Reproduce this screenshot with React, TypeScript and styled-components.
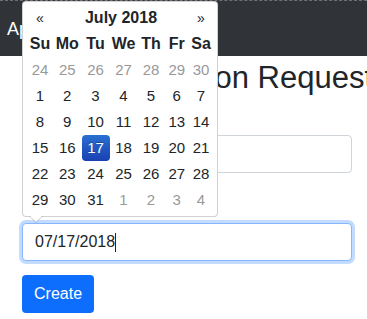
import React from 'react';
import styled, { createGlobalStyle, css } from 'styled-components';

const GlobalStyle = createGlobalStyle`
  html, body {
    margin: 0;
    padding: 0;
    background: #fff;
    font-family: "Liberation Sans", Arial, sans-serif;
    color: #212529;
  }
  * { box-sizing: border-box; }
`;

const weeks = [
  [24, 25, 26, 27, 28, 29, 30],
  [1, 2, 3, 4, 5, 6, 7],
  [8, 9, 10, 11, 12, 13, 14],
  [15, 16, 17, 18, 19, 20, 21],
  [22, 23, 24, 25, 26, 27, 28],
  [29, 30, 31, 1, 2, 3, 4],
];
const dayNames = ['Su', 'Mo', 'Tu', 'We', 'Th', 'Fr', 'Sa'];

const App = () => {
  return (
    <>
      <GlobalStyle />
      <Page>
        <Navbar>
          <Brand>Application</Brand>
        </Navbar>
        <Main>
          <Title>Create Vacation Request</Title>
          <TextInput type="text" aria-label="Employee" defaultValue="" />
          <FocusedField aria-label="Start date">
            07/17/2018<Caret />
          </FocusedField>
          <Button>Create</Button>

          <Picker>
            <Grid>
              <NavCell>«</NavCell>
              <MonthCell>July 2018</MonthCell>
              <NavCell>»</NavCell>
              {dayNames.map((d) => (
                <DowCell key={d}>{d}</DowCell>
              ))}
              {weeks.map((week, wi) =>
                week.map((day, di) => {
                  const outside = wi === 0 || (wi === 5 && di > 2);
                  return (
                    <DayCell
                      key={`${wi}-${di}`}
                      $muted={outside}
                      $active={wi === 3 && day === 17}
                    >
                      {day}
                    </DayCell>
                  );
                })
              )}
            </Grid>
          </Picker>
        </Main>
      </Page>
    </>
  );
};

export default App;

const Page = styled.div`
  width: 100%;
  min-height: 319px;
`;

const Navbar = styled.nav`
  height: 56px;
  background-color: #303438;
  border-top: 1px dashed #6d7074;
  display: flex;
  align-items: center;
  padding-left: 7px;
`;

const Brand = styled.span`
  color: #fff;
  font-size: 18px;
  line-height: 30px;
`;

const Main = styled.div`
  position: relative;
  padding: 0 15px 0 22px;
  display: flex;
  flex-direction: column;
  align-items: flex-start;
`;

const Title = styled.h1`
  margin: 3px 0 39px 7px;
  font-size: 31px;
  font-weight: 400;
  line-height: 1.2;
  white-space: nowrap;
`;

const fieldBase = css`
  width: 100%;
  height: 38px;
  padding: 0 12px;
  font-family: "Liberation Sans", Arial, sans-serif;
  font-size: 16px;
  color: #212529;
  background: #fff;
  border-radius: 4px;
`;

const TextInput = styled.input`
  ${fieldBase}
  border: 1px solid #ced4da;
  margin-bottom: 50px;
  outline: none;
`;

const FocusedField = styled.div`
  ${fieldBase}
  border: 1px solid #86b7fe;
  box-shadow: 0 0 0 3px rgba(13, 110, 253, 0.25);
  display: flex;
  align-items: center;
`;

const Caret = styled.span`
  display: inline-block;
  width: 1px;
  height: 19px;
  background: #212529;
`;

const Button = styled.button`
  margin-top: 14px;
  height: 38px;
  padding: 0 12px;
  border: none;
  border-radius: 4px;
  background: #0d6efd;
  color: #fff;
  font-family: "Liberation Sans", Arial, sans-serif;
  font-size: 16px;
`;

const Picker = styled.div`
  position: absolute;
  top: -55px;
  left: 22px;
  width: 196px;
  padding: 3px 4px;
  background: #fff;
  border: 1px solid rgba(0, 0, 0, 0.18);
  border-radius: 4px;

  &::before,
  &::after {
    content: '';
    position: absolute;
    border-left-style: solid;
    border-right-style: solid;
    border-left-color: transparent;
    border-right-color: transparent;
    border-top-style: solid;
  }
  &::before {
    left: 6px;
    bottom: -7px;
    border-width: 7px 7px 0;
    border-top-color: rgba(0, 0, 0, 0.2);
  }
  &::after {
    left: 7px;
    bottom: -6px;
    border-width: 6px 6px 0;
    border-top-color: #fff;
  }
`;

const Grid = styled.div`
  display: grid;
  grid-template-columns: 26px 28.5px 28px 28px 27px 24.5px 24px;
  grid-auto-rows: 26px;
  font-size: 15px;
  text-align: center;
`;

const NavCell = styled.div`
  line-height: 26px;
  font-size: 14px;
`;

const MonthCell = styled.div`
  grid-column: span 5;
  line-height: 26px;
  font-size: 16px;
  font-weight: 700;
`;

const DowCell = styled.div`
  line-height: 26px;
  font-size: 16px;
  font-weight: 700;
`;

const DayCell = styled.div<{ $muted?: boolean; $active?: boolean }>`
  line-height: 26px;
  border-radius: 4px;
  color: ${(p) => (p.$muted ? '#999' : '#212529')};
  ${(p) =>
    p.$active &&
    css`
      color: #fff;
      background-image: linear-gradient(to bottom, #2a70d0, #1a40b2);
      text-shadow: 0 -1px 0 rgba(0, 0, 0, 0.25);
    `}
`;
